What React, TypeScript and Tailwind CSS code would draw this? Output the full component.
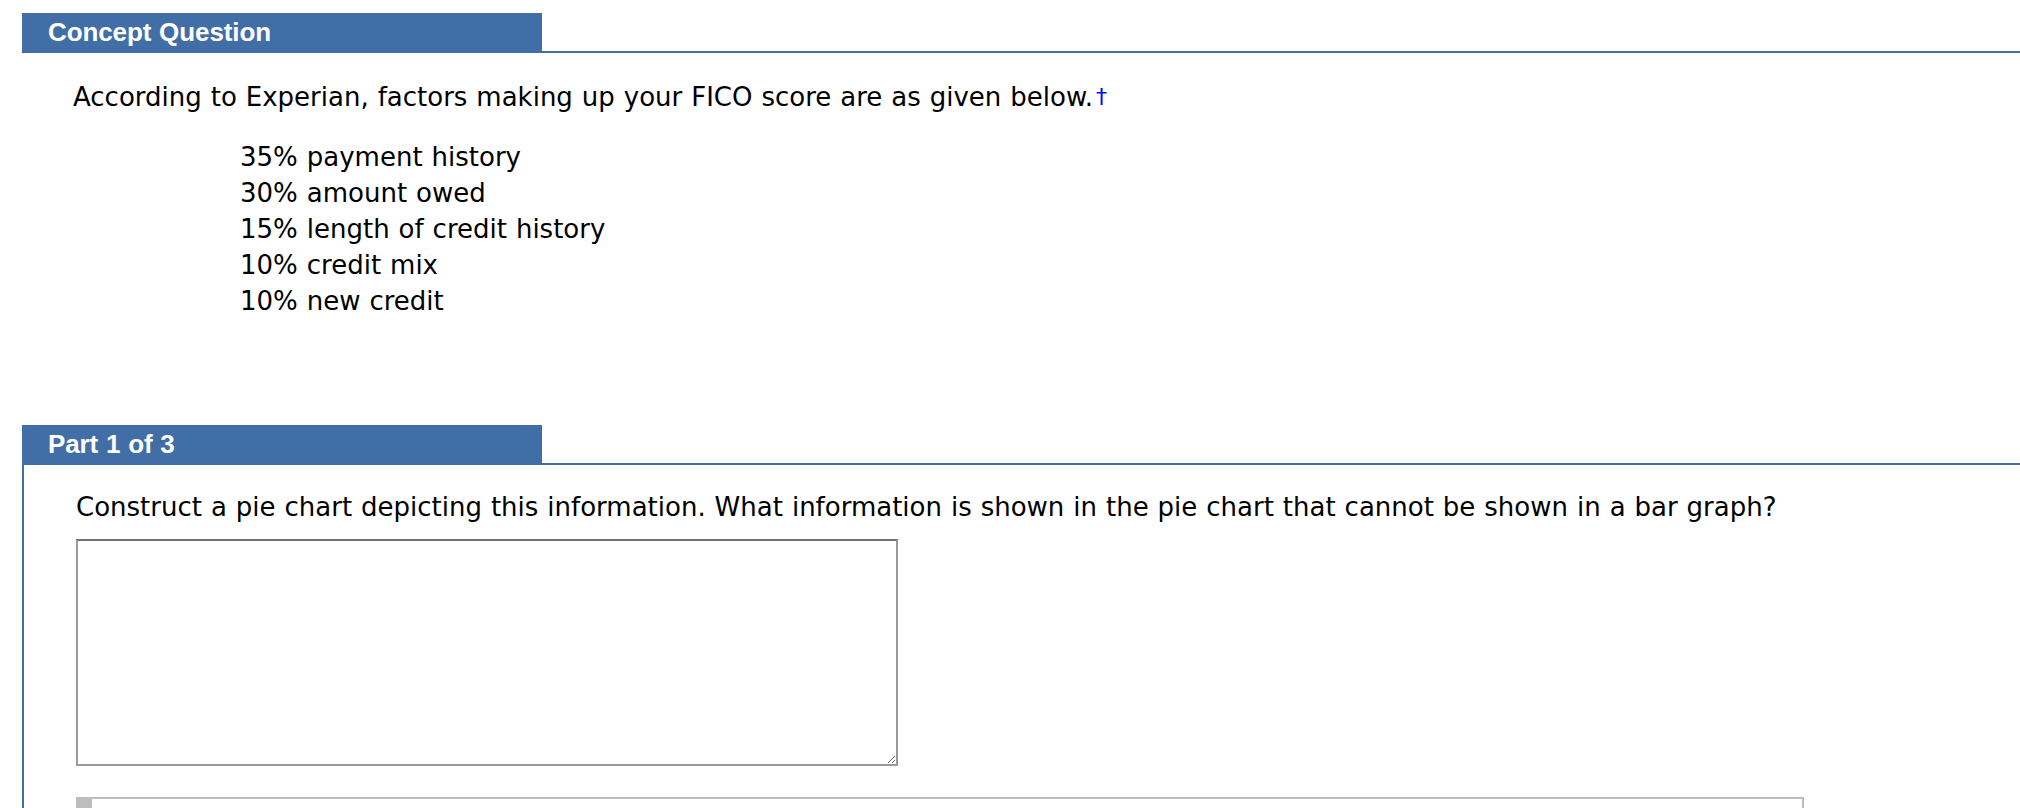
import React from "react";

const body = { fontFamily: '"DejaVu Sans", Verdana, sans-serif', wordSpacing: "0.7px" };
const head = { fontFamily: '"Liberation Sans", Arial, Helvetica, sans-serif' };

function Tab({ title }: { title: string }) {
  return (
    <div className="flex items-end border-b-2 border-[#416ea6]">
      <div
        className="flex h-[38px] w-[520px] items-center bg-[#416ea6] pl-[26px] text-[26px] font-bold text-white tracking-[-0.1px]"
        style={head}
      >
        {title}
      </div>
    </div>
  );
}

export default function App() {
  const items = [
    "35% payment history",
    "30% amount owed",
    "15% length of credit history",
    "10% credit mix",
    "10% new credit",
  ];
  return (
    <div className="h-[808px] w-full overflow-hidden bg-white pl-[22px] pt-[13px] text-black" style={body}>
      <Tab title="Concept Question" />
      <div className="pl-[51px] pt-[26px] text-[26px] leading-[36px]">
        According to Experian, factors making up your FICO score are as given below.
        <span className="ml-[3px] align-[2px] text-[22px] text-[#0000ff]">†</span>
      </div>
      <div className="pl-[218px] pt-[24px] text-[26px] leading-[36px]">
        {items.map((t) => (
          <div key={t}>{t}</div>
        ))}
      </div>
      <div className="mt-[106px]">
        <Tab title="Part 1 of 3" />
        <div className="border-l-2 border-[#416ea6] pl-[52px] pt-[24px]">
          <div className="text-[26px] leading-[36px]">
            Construct a pie chart depicting this information. What information is shown in the pie chart that cannot be shown in a bar graph?
          </div>
          <textarea className="mt-[14px] block h-[227px] w-[822px] border-2 border-[#999999] border-t-[#717171] bg-white outline-none" />
          <div className="mt-[31px] flex h-[60px] w-[1728px] border-r-2 border-t-2 border-[#bdbdbd]">
            <div className="w-[16px] bg-[#bdbdbd]" />
            <div className="flex-1" />
          </div>
        </div>
      </div>
    </div>
  );
}
